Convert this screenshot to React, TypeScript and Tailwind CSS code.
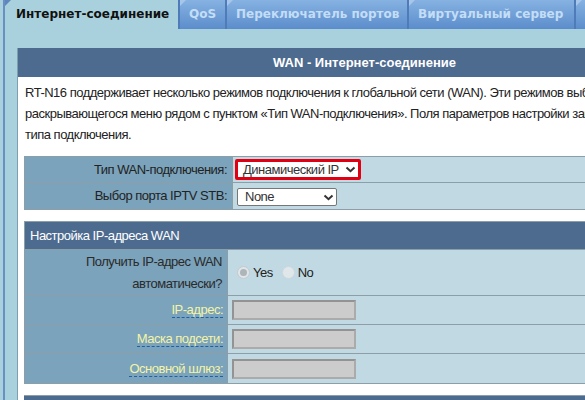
import React from "react";

const Chevron = () => (
  <svg width="11" height="7" viewBox="0 0 11 7" className="shrink-0">
    <path d="M1.5 1.5 L5.5 5.2 L9.5 1.5" fill="none" stroke="#333" strokeWidth="2" />
  </svg>
);

const Corner = ({ color }: { color: string }) => (
  <div
    className="absolute left-0 top-0 w-0 h-0 border-t-[6px] border-r-[6px] border-r-transparent"
    style={{ borderTopColor: color }}
  />
);

const InactiveTab = ({ label, w }: { label: string; w: string }) => (
  <div
    className={`relative shrink-0 ml-[2px] h-[29px] ${w} bg-gradient-to-b from-[#86b2e2] to-[#5c8dcb] pl-[9px] pt-[5px] text-[12px] font-bold text-[#c3ddf6] whitespace-nowrap tracking-normal`}
    style={{ fontFamily: '"DejaVu Sans", Verdana, sans-serif' }}
  >
    <Corner color="#a7c6ea" />
    {label}
  </div>
);

const YellowLabel = ({ text }: { text: string }) => (
  <span className="text-[#f4f4a6] border-b border-dashed border-[#1f5fa3] leading-[15px]">{text}</span>
);

const Input = () => (
  <div className="ml-[4px] w-[124px] h-[20px] bg-[#cccccc] border-2 border-t-[#939393] border-l-[#939393] border-b-[#ababab] border-r-[#ababab]" />
);

export default function App() {
  return (
    <div
      className="w-[585px] h-[400px] overflow-hidden bg-[#a9d1dd] flex text-[13px] text-[#222] tracking-[-0.5px]"
      style={{ fontFamily: '"Liberation Sans", Arial, sans-serif' }}
    >
      <div className="w-[3px] shrink-0 bg-[#a9d1dd]" />
      <div className="w-[2px] shrink-0 bg-[#6a8fc2]" />
      <div className="flex-1 min-w-0 flex flex-col">
        {/* Tabs */}
        <div className="flex h-[29px] shrink-0 bg-[#4f7cb8]">
          <div
            className="relative shrink-0 w-[173px] h-[29px] bg-[#a9d1dd] pl-[11px] pt-[5px] text-[12px] font-bold text-[#111] whitespace-nowrap tracking-normal"
            style={{ fontFamily: '"DejaVu Sans", Verdana, sans-serif' }}
          >
            <Corner color="#5f86bd" />
            Интернет-соединение
          </div>
          <InactiveTab label="QoS" w="w-[45px]" />
          <InactiveTab label="Переключатель портов" w="w-[180px]" />
          <InactiveTab label="Виртуальный сервер" w="w-[165px]" />
          <InactiveTab label="DMZ" w="w-[60px]" />
        </div>

        {/* Content */}
        <div className="pl-[12px] pt-[19px]">
          <div className="w-[694px] bg-white border-l border-[#7c9fb3]">
            <div className="h-[29px] bg-[#4d6a8f] flex items-center justify-center text-white font-bold text-[13px] tracking-normal">
              WAN - Интернет-соединение
            </div>
            <div className="pl-[7px] pt-[5px] leading-[21px] whitespace-nowrap">
              <div>RT-N16 поддерживает несколько режимов подключения к глобальной сети (WAN). Эти режимов выбираются с помощью</div>
              <div>раскрывающегося меню рядом с пунктом «Тип WAN-подключения». Поля параметров настройки зависят от выбранного</div>
              <div>типа подключения.</div>
            </div>

            {/* Table 1 */}
            <div className="mx-[6px] mt-[11px] border border-[#8c9ea8]">
              <div className="flex h-[26px] border-b border-[#8c9ea8]">
                <div className="w-[208px] shrink-0 bg-[#7ba3bb] border-r border-[#8c9ea8] flex items-center justify-end pr-[5px] whitespace-nowrap">
                  Тип WAN-подключения:
                </div>
                <div className="flex-1 bg-[#c1d9e2] flex items-center">
                  <div className="ml-[2px] w-[126px] h-[21px] border-[3px] border-[#e00012] rounded-[2px] bg-white flex items-center justify-between pl-[5px] pr-[2px] text-[#333] whitespace-nowrap">
                    <span>Динамический IP</span>
                    <Chevron />
                  </div>
                </div>
              </div>
              <div className="flex h-[26px]">
                <div className="w-[208px] shrink-0 bg-[#7ba3bb] border-r border-[#8c9ea8] flex items-center justify-end pr-[5px] whitespace-nowrap">
                  Выбор порта IPTV STB:
                </div>
                <div className="flex-1 bg-[#c1d9e2] flex items-center">
                  <div className="ml-[4px] mt-[2px] w-[100px] h-[18px] border border-[#767676] rounded-[2px] bg-white flex items-center justify-between pl-[7px] pr-[2px] text-[#333]">
                    <span>None</span>
                    <Chevron />
                  </div>
                </div>
              </div>
            </div>

            {/* Table 2 */}
            <div className="mx-[6px] mt-[11px] border border-[#8c9ea8]">
              <div className="h-[28px] bg-[#4d6a8f] flex items-center pl-[5px] text-white border-b border-[#8c9ea8]">
                Настройка IP-адреса WAN
              </div>
              <div className="flex h-[46px] border-b border-[#8c9ea8]">
                <div className="w-[203px] shrink-0 bg-[#7ba3bb] border-r border-[#8c9ea8] flex flex-col justify-center items-end pr-[5px] leading-[22px] text-[#2a2a2a] whitespace-nowrap">
                  <span>Получить IP-адрес WAN</span>
                  <span>автоматически?</span>
                </div>
                <div className="flex-1 bg-[#c1d9e2] flex items-center pl-[9px]">
                  <div className="w-[13px] h-[13px] rounded-full border border-[#c3cbcf] bg-[#dfe5e8] flex items-center justify-center">
                    <div className="w-[7px] h-[7px] rounded-full bg-[#adb5b9]" />
                  </div>
                  <span className="ml-[3px]">Yes</span>
                  <div className="ml-[9px] w-[13px] h-[13px] rounded-full border border-[#cfd8dc] bg-[#dfe7ea]" />
                  <span className="ml-[3px]">No</span>
                </div>
              </div>
              {["IP-адрес:", "Маска подсети:", "Основной шлюз:"].map((t, i) => (
                <div key={t} className={`flex h-[29px] ${i < 2 ? "border-b border-[#8c9ea8]" : ""}`}>
                  <div className="w-[203px] shrink-0 bg-[#7ba3bb] border-r border-[#8c9ea8] flex items-center justify-end pr-[4px] whitespace-nowrap">
                    <YellowLabel text={t} />
                  </div>
                  <div className="flex-1 bg-[#c1d9e2] flex items-center">
                    <Input />
                  </div>
                </div>
              ))}
            </div>

            <div className="mt-[11px] mx-[6px] h-[29px] bg-[#4d6a8f] border-t border-[#8c9ea8]" />
          </div>
        </div>
      </div>
    </div>
  );
}
